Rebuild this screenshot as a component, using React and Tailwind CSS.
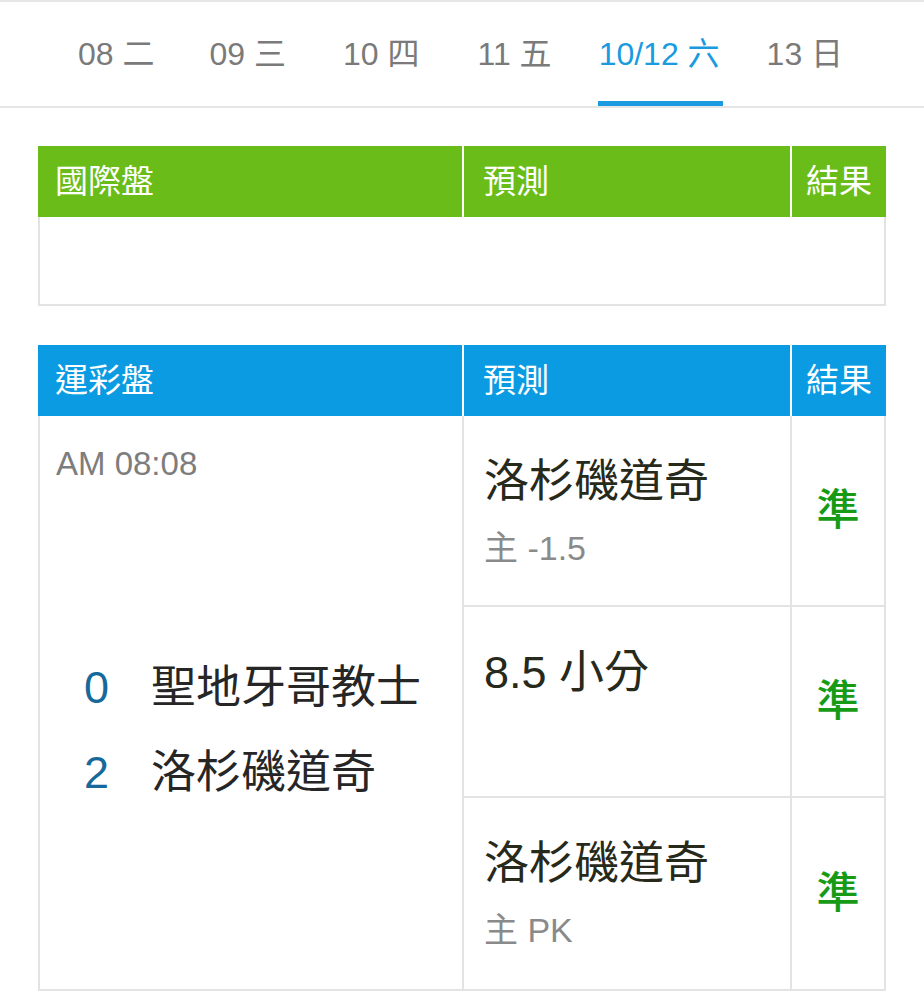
import React from "react";

const days = [
  { label: "08 二", ml: "ml-0" },
  { label: "09 三", ml: "ml-[55px]" },
  { label: "10 四", ml: "ml-[57px]" },
  { label: "11 五", ml: "ml-[58px]" },
  { label: "10/12 六", ml: "ml-[47px]", active: true },
  { label: "13 日", ml: "ml-[47px]" },
];

const picks = [
  { main: "洛杉磯道奇", sub: "主 -1.5" },
  { main: "8.5 小分", sub: "" },
  { main: "洛杉磯道奇", sub: "主 PK" },
];

const font = { fontFamily: '"Liberation Sans", "Noto Sans CJK TC", sans-serif' };

const Header = ({ title, color }) => (
  <div className={`flex h-[71px] text-white text-[33px] ${color}`}>
    <div className="w-[426px] flex items-center pl-[17px] border-r-2 border-white">{title}</div>
    <div className="w-[328px] flex items-center pl-[19px] border-r-2 border-white">預測</div>
    <div className="flex-1 flex items-center pl-[14px]">結果</div>
  </div>
);

const App = () => {
  return (
    <div className="w-[924px] h-[1000px] bg-white" style={font}>
      {/* tab bar */}
      <div className="h-[108px] border-t-2 border-b-2 border-[#e6e6e6] flex pl-[78px]">
        {days.map((d) => (
          <div key={d.label} className={`relative flex items-center h-full ${d.ml}`}>
            <span className={`text-[32px] ${d.active ? "text-[#1a9be0]" : "text-[#7a7a7a]"}`}>{d.label}</span>
            {d.active && (
              <div className="absolute left-[-1px] right-[-3px] bottom-0 h-[5px] bg-[#1a9be0]" />
            )}
          </div>
        ))}
      </div>

      <div className="px-[38px]">
        {/* international */}
        <div className="mt-[38px]">
          <Header title="國際盤" color="bg-[#6abd18]" />
          <div className="h-[89px] border-2 border-t-0 border-[#e3e3e3]" />
        </div>

        {/* sports lottery */}
        <div className="mt-[39px]">
          <Header title="運彩盤" color="bg-[#0a9be3]" />
          <div className="flex border-2 border-t-0 border-[#e3e3e3]">
            <div className="w-[424px] border-r-2 border-[#e3e3e3]">
              <div className="pt-[28px] pl-[16px] text-[33px] leading-[40px] text-[#7d7d7d]">AM 08:08</div>
              <div className="mt-[161px] text-[45px] text-[#262626]">
                <div className="flex items-center h-[85px] pl-[44px]">
                  <span className="w-[67px] text-[#17699c]">0</span>
                  <span>聖地牙哥教士</span>
                </div>
                <div className="flex items-center h-[85px] pl-[44px]">
                  <span className="w-[67px] text-[#17699c]">2</span>
                  <span>洛杉磯道奇</span>
                </div>
              </div>
            </div>
            <div className="flex-1 flex flex-col">
              {picks.map((p, i) => (
                <div key={i} className={`flex h-[191px] ${i < 2 ? "border-b-2 border-[#e3e3e3]" : ""}`}>
                  <div className="w-[328px] border-r-2 border-[#e3e3e3] pl-[20px] pt-[40px]">
                    <div className="text-[45px] leading-[52px] text-[#27291a]">{p.main}</div>
                    {p.sub && <div className="mt-[8px] text-[34px] leading-[64px] text-[#8a8a8a]">{p.sub}</div>}
                  </div>
                  <div className="flex-1 flex items-center justify-center text-[43px] text-[#179b17] font-medium">準</div>
                </div>
              ))}
            </div>
          </div>
        </div>
      </div>
    </div>
  );
};

export default App;
